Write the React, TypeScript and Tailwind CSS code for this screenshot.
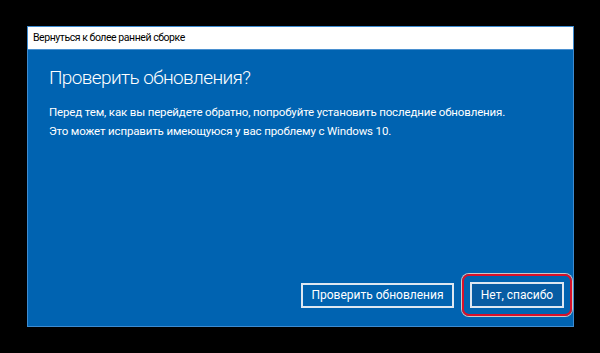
import React from "react";

export default function App() {
  return (
    <div className="w-[600px] h-[353px] bg-black flex items-start pt-[26px] pl-[27px]" style={{ fontFamily: 'Roboto, "Noto Sans", sans-serif' }}>
      <div className="w-[547px] h-[301px] flex flex-col border border-[#3d8bd0] bg-[#0063b1]">
        <div className="h-[23px] bg-white flex items-center pl-[5px] text-[10.5px] tracking-[-0.45px] text-black border-b border-[#4a90d0]">
          Вернуться к более ранней сборке
        </div>
        <div className="flex-1 flex flex-col px-[21px] pt-[14px]">
          <div className="text-[19px] font-light tracking-[-0.6px] text-white leading-[27px]">Проверить обновления?</div>
          <div className="mt-[12px] text-[11.5px] tracking-[-0.15px] text-white leading-[19px] whitespace-nowrap">
            Перед тем, как вы перейдете обратно, попробуйте установить последние обновления.
            <br />
            Это может исправить имеющуюся у вас проблему с Windows 10.
          </div>
          <div className="flex-1" />
          <div className="flex justify-end items-center gap-[8px] mb-[10px] mr-[-20px]">
            <div className="w-[153px] h-[25px] border-2 border-[#dde7f1] flex items-center justify-center text-[12px] text-white">
              Проверить обновления
            </div>
            <div className="rounded-[7px] border-2 border-[#d8112a] p-[6px] shadow-[0_0_0_1px_#c8c8c8]">
              <div className="w-[94px] h-[26px] border-2 border-[#dde7f1] bg-[#075ca3] flex items-center justify-center text-[12px] text-white">
                Нет, спасибо
              </div>
            </div>
          </div>
        </div>
      </div>
    </div>
  );
}
